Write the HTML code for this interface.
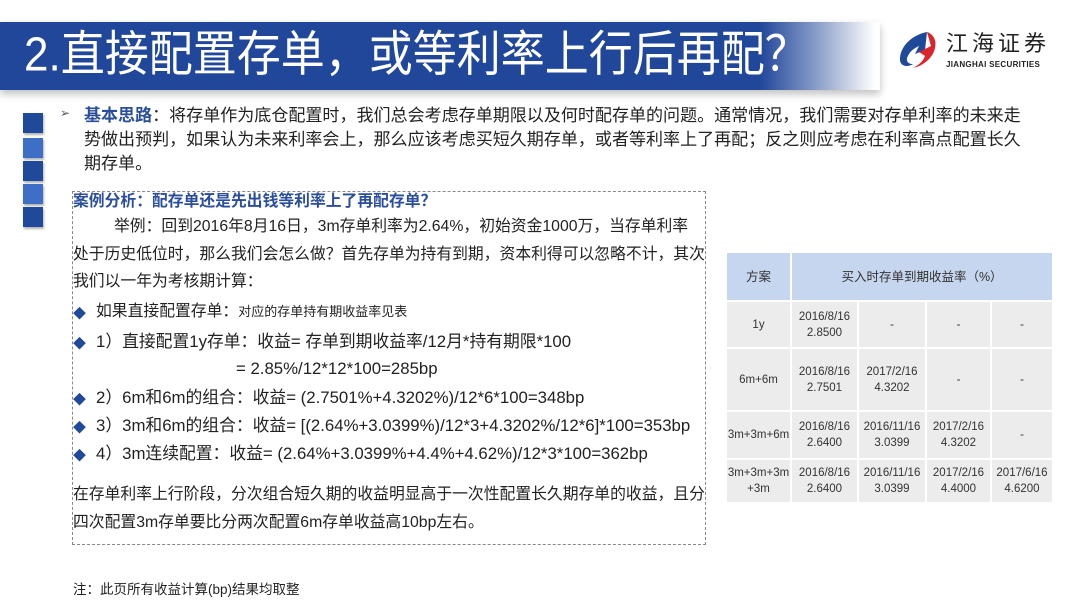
<!DOCTYPE html>
<html><head><meta charset="utf-8"><style>
body{margin:0;width:1080px;height:608px;overflow:hidden;background:#fff;position:relative;font-family:"Liberation Sans","Noto Sans CJK SC",sans-serif;color:#222}
.a{position:absolute;white-space:nowrap}
.band{position:absolute;left:0;top:22px;width:880px;height:68px;background:linear-gradient(90deg,#21479a 0,#21479a 760px,rgba(33,71,154,0.5) 820px,rgba(255,255,255,0) 875px);box-shadow:0 4px 8px rgba(0,0,0,.25)}
.title{left:24px;top:22px;font-size:44px;color:#fff;line-height:66px;transform:scaleY(1.1);transform-origin:left center}
.sq{position:absolute;left:23px;width:20px;height:20px;box-shadow:1px 2px 2px rgba(0,0,0,.3)}
.t{font-size:16.8px;line-height:20px}
.p{font-size:17.05px;line-height:20px}
.u{font-size:15.8px;line-height:20px}
.b{color:#2a4e9c;font-weight:bold}
.d{color:#1f4a9a;font-size:13px}
table{position:absolute;left:725px;top:251px;border-collapse:collapse;font-size:11.5px;color:#333;text-align:center}
td{border:2px solid #fff;background:#ececec;padding:0;line-height:16px}
tr.h td{background:#c6d6ee;font-size:12.5px}
</style></head><body>
<div class="band"></div>
<div class="a title">2.直接配置存单，或等利率上行后再配？</div>
<svg class="a" style="left:897px;top:30px" width="42" height="40" viewBox="0 0 42 40">
<path d="M30 2 C18 4 4 14 3 28 C2 36 10 38 16 34 C10 34 8 30 12 24 C15 19 22 16 22 16 L18 24 L28 20 Z" fill="#1f4a9a"/>
<path d="M30 2 L34 16 L22 22 L28 26 C26 32 20 36 16 38 C26 36 36 28 38 18 C40 10 36 4 30 2Z" fill="#d9262c"/>
</svg>
<div class="a" style="left:946px;top:31px;font-size:22px;line-height:26px;color:#222;letter-spacing:4px">江海证券</div>
<div class="a" style="left:946px;top:60px;font-size:8px;font-weight:bold;color:#222;letter-spacing:0.3px">JIANGHAI SECURITIES</div>

<div class="sq" style="top:113px;background:#1f4a9a"></div>
<div class="sq" style="top:138px;background:#3e6fc6"></div>
<div class="sq" style="top:161px;background:#1f4a9a"></div>
<div class="sq" style="top:184px;background:#3e6fc6"></div>
<div class="sq" style="top:207px;background:#1f4a9a"></div>

<div class="a" style="left:60px;top:106px;font-size:12px;color:#555">➢</div>
<div class="a p" style="left:84px;top:106px"><span class="b">基本思路</span>：将存单作为底仓配置时，我们总会考虑存单期限以及何时配存单的问题。通常情况，我们需要对存单利率的未来走</div>
<div class="a p" style="left:84px;top:130px">势做出预判，如果认为未来利率会上，那么应该考虑买短久期存单，或者等利率上了再配；反之则应考虑在利率高点配置长久</div>
<div class="a p" style="left:84px;top:154px">期存单。</div>

<div class="a" style="left:72px;top:191px;width:632px;height:352px;border:1px dashed #888"></div>
<div class="a u b" style="left:73px;top:192px">案例分析：配存单还是先出钱等利率上了再配存单？</div>
<div class="a u" style="left:114px;top:217px">举例：回到2016年8月16日，3m存单利率为2.64%，初始资金1000万，当存单利率</div>
<div class="a u" style="left:73px;top:245px">处于历史低位时，那么我们会怎么做？首先存单为持有到期，资本利得可以忽略不计，其次</div>
<div class="a u" style="left:73px;top:272px">我们以一年为考核期计算：</div>
<div class="a d" style="left:73px;top:303px">◆</div>
<div class="a u" style="left:96px;top:302px">如果直接配置存单：<span style="font-size:13px">对应的存单持有期收益率见表</span></div>
<div class="a d" style="left:73px;top:333px">◆</div>
<div class="a t" style="left:96px;top:332px">1）直接配置1y存单：收益= 存单到期收益率/12月*持有期限*100</div>
<div class="a t" style="left:236px;top:359px">= 2.85%/12*12*100=285bp</div>
<div class="a d" style="left:73px;top:389px">◆</div>
<div class="a t" style="left:96px;top:388px">2）6m和6m的组合：收益= (2.7501%+4.3202%)/12*6*100=348bp</div>
<div class="a d" style="left:73px;top:417px">◆</div>
<div class="a t" style="left:96px;top:416px">3）3m和6m的组合：收益= [(2.64%+3.0399%)/12*3+4.3202%/12*6]*100=353bp</div>
<div class="a d" style="left:73px;top:445px">◆</div>
<div class="a t" style="left:96px;top:444px">4）3m连续配置：收益= (2.64%+3.0399%+4.4%+4.62%)/12*3*100=362bp</div>
<div class="a u" style="left:73px;top:485px">在存单利率上行阶段，分次组合短久期的收益明显高于一次性配置长久期存单的收益，且分</div>
<div class="a u" style="left:73px;top:513px">四次配置3m存单要比分两次配置6m存单收益高10bp左右。</div>
<div class="a" style="left:73px;top:578px;font-size:13.5px">注：此页所有收益计算(bp)结果均取整</div>

<table>
<tr class="h" style="height:49px"><td style="width:63px">方案</td><td colspan="4">买入时存单到期收益率（%）</td></tr>
<tr style="height:47px"><td style="width:63px">1y</td><td style="width:65px">2016/8/16<br>2.8500</td><td style="width:66px">-</td><td style="width:63px">-</td><td style="width:60px">-</td></tr>
<tr style="height:63px"><td>6m+6m</td><td>2016/8/16<br>2.7501</td><td>2017/2/16<br>4.3202</td><td>-</td><td>-</td></tr>
<tr style="height:48px"><td>3m+3m+6m</td><td>2016/8/16<br>2.6400</td><td>2016/11/16<br>3.0399</td><td>2017/2/16<br>4.3202</td><td>-</td></tr>
<tr style="height:44px"><td>3m+3m+3m<br>+3m</td><td>2016/8/16<br>2.6400</td><td>2016/11/16<br>3.0399</td><td>2017/2/16<br>4.4000</td><td>2017/6/16<br>4.6200</td></tr>
</table>
</body></html>
